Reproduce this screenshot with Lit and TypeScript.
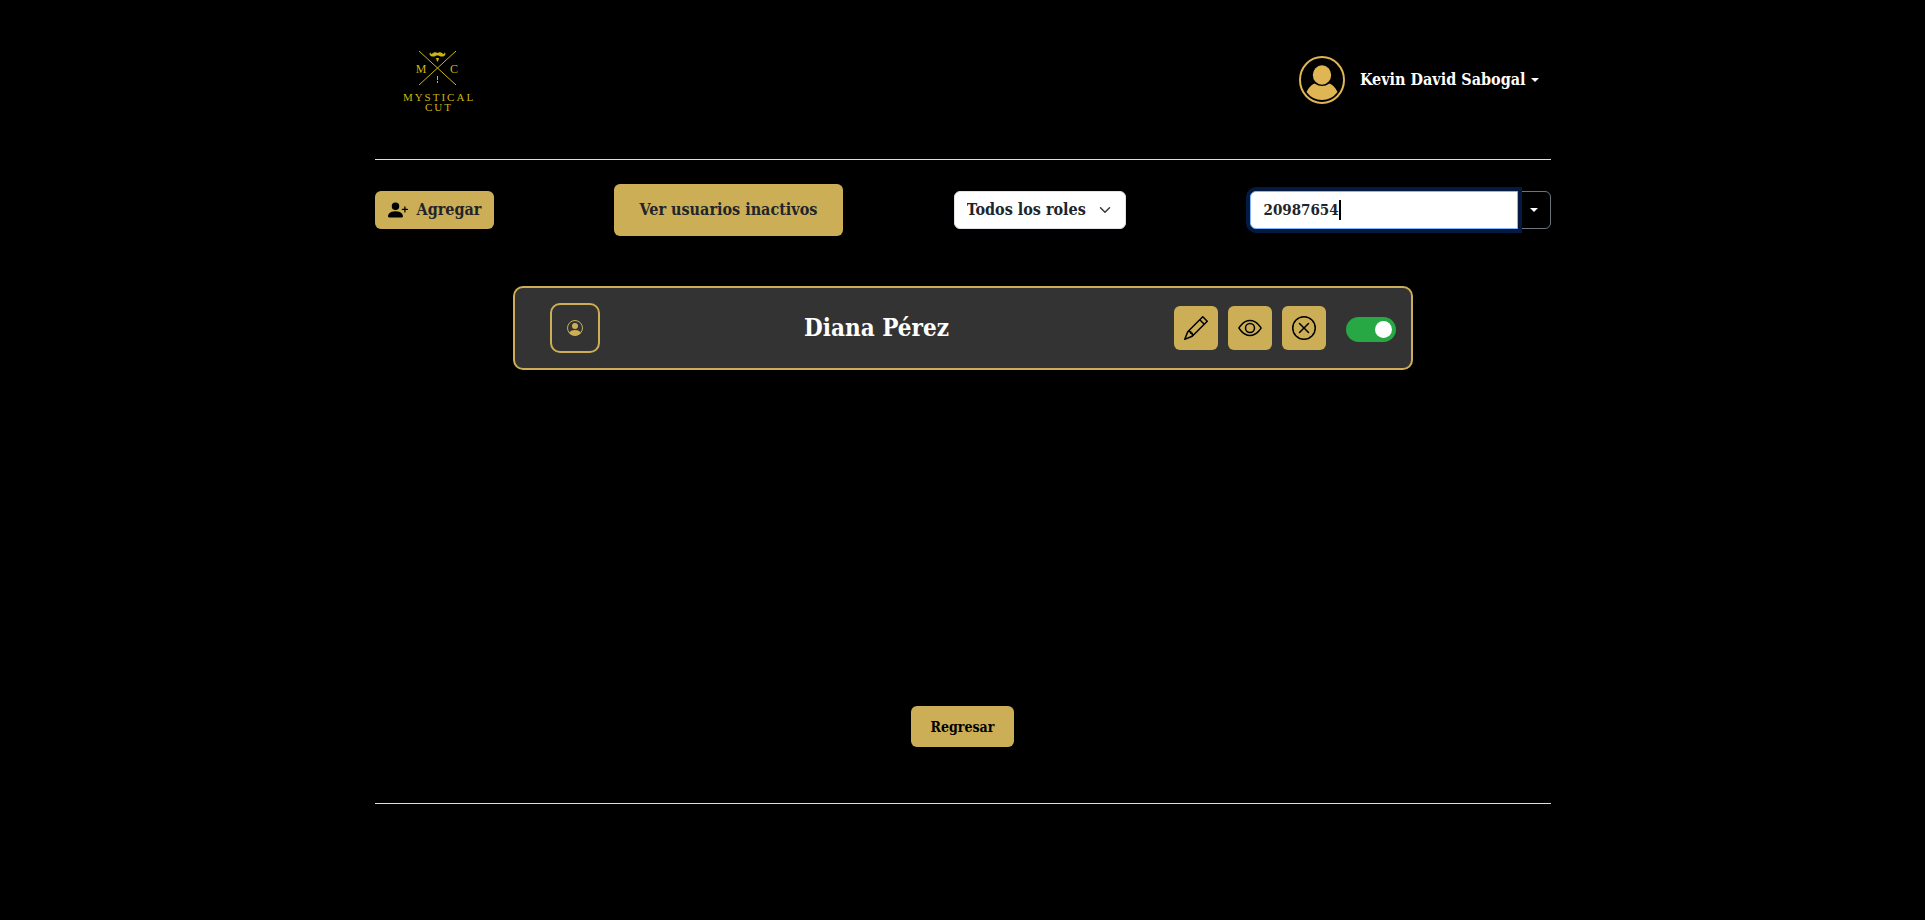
import { LitElement, html, css, svg } from "lit";
import { customElement, query, state } from "lit/decorators.js";

const personPlus = svg`<path d="M1 14s-1 0-1-1 1-4 6-4 6 3 6 4-1 1-1 1zm5-6a3 3 0 1 0 0-6 3 3 0 0 0 0 6"/><path fill-rule="evenodd" d="M13.5 5a.5.5 0 0 1 .5.5V7h1.5a.5.5 0 0 1 0 1H14v1.5a.5.5 0 0 1-1 0V8h-1.5a.5.5 0 0 1 0-1H13V5.500a.5.5 0 0 1 .5-.5"/>`;
const pencil = svg`<path d="M12.146.146a.5.5 0 0 1 .708 0l3 3a.5.5 0 0 1 0 .708l-10 10a.5.5 0 0 1-.168.11l-5 2a.5.5 0 0 1-.65-.65l2-5a.5.5 0 0 1 .11-.168zM11.207 2.500 13.500 4.793 14.793 3.500 12.500 1.207zm1.586 3L10.500 3.207 4 9.707V10h.5a.5.5 0 0 1 .5.5v.5h.5a.5.5 0 0 1 .5.5v.5h.293zm-9.761 5.175-.106.106-1.528 3.821 3.821-1.528.106-.106A.5.5 0 0 1 5 12.500V12h-.5a.5.5 0 0 1-.5-.5V11h-.5a.5.5 0 0 1-.468-.325"/>`;
const eye = svg`<path d="M16 8s-3-5.500-8-5.500S0 8 0 8s3 5.500 8 5.500S16 8 16 8M1.173 8a13 13 0 0 1 1.660-2.043C4.120 4.668 5.880 3.500 8 3.500s3.879 1.168 5.168 2.457A13 13 0 0 1 14.828 8q-.086.130-.195.288c-.335.480-.830 1.120-1.465 1.755C11.879 11.332 10.119 12.500 8 12.500s-3.879-1.168-5.168-2.457A13 13 0 0 1 1.172 8z"/><path d="M8 5.500a2.500 2.500 0 1 0 0 5 2.500 2.500 0 0 0 0-5M4.500 8a3.500 3.500 0 1 1 7 0 3.500 3.500 0 0 1-7 0"/>`;
const xCircle = svg`<path d="M8 15A7 7 0 1 1 8 1a7 7 0 0 1 0 14m0 1A8 8 0 1 0 8 0a8 8 0 0 0 0 16"/><path d="M4.646 4.646a.5.5 0 0 1 .708 0L8 7.293l2.646-2.647a.5.5 0 0 1 .708.708L8.707 8l2.647 2.646a.5.5 0 0 1-.708.708L8 8.707l-2.646 2.647a.5.5 0 0 1-.708-.708L7.293 8 4.646 5.354a.5.5 0 0 1 0-.708"/>`;

@customElement("app-root")
export class AppRoot extends LitElement {
  @state() private search = "20987654";
  @state() private caretAt = 8;
  @query(".search") private searchBox!: HTMLInputElement;

  static styles = css`
    :host {
      --gold: #cbae55;
      display: block;
      box-sizing: border-box;
      min-height: 100vh;
      padding: 0 24px;
      background: #000;
      color: #fff;
      font: bold 16px/24px "DejaVu Serif Condensed", "DejaVu Serif", serif;
      font-stretch: condensed;
    }
    * { box-sizing: border-box; }
    button, input, select { font: inherit; margin: 0; }
    button { cursor: pointer; }
    svg { display: block; fill: currentColor; }
    .page { max-width: 1176px; margin: 0 auto; }
    .header {
      display: flex;
      align-items: center;
      justify-content: space-between;
      height: 159px;
      padding: 0 12px;
    }
    .brand { margin-left: 12px; color: #cdb50f; }
    .brand text { font: 12px "Liberation Serif", serif; text-anchor: middle; }
    .brand .wordmark { font-size: 11px; letter-spacing: 2px; }
    .account {
      display: flex;
      align-items: center;
      gap: 15px;
      padding: 0;
      border: 0;
      background: none;
      color: #fff;
    }
    .avatar { color: #e0b554; }
    .label { display: flex; align-items: center; gap: 5px; }
    .rule { height: 1px; margin: 0; border: 0; background: #dedede; }
    .toolbar {
      display: grid;
      grid-template-columns: 216fr 276fr 346fr 338fr;
      align-items: center;
      padding: 24px 0 50px;
    }
    .gold { border: 0; border-radius: 6px; background: var(--gold); color: #212529; }
    .add { display: flex; align-items: center; justify-self: start; gap: 9px; height: 38px; padding: 0 13px; }
    .add svg { color: #000; }
    .inactive { justify-self: center; height: 52px; padding: 0 26px; }
    .roles { display: grid; justify-self: center; align-items: center; width: 172px; }
    .roles > * { grid-area: 1 / 1; }
    .roles select {
      width: 100%;
      height: 38px;
      padding: 0 36px 0 12px;
      border: 1px solid #dee2e6;
      border-radius: 6px;
      appearance: none;
      background: #fff;
      color: #212529;
    }
    .roles svg { justify-self: end; margin-right: 15px; pointer-events: none; color: #343a40; }
    .find { display: flex; justify-self: end; width: 301px; font-size: 15px; position: relative; }
    .search {
      flex: 1;
      min-width: 0;
      height: 38px;
      padding: 0 13px;
      border: 1px solid #86b7fe;
      border-radius: 6px 0 0 6px;
      outline: 0;
      background: #fff;
      color: #212529;
      caret-color: transparent;
      box-shadow: 0 0 0 4px #031b40;
      z-index: 1;
    }
    .cursor {
      position: absolute;
      top: 9px;
      width: 2px;
      height: 20px;
      background: #000;
      z-index: 2;
      pointer-events: none;
    }
    .more {
      display: grid;
      place-items: center;
      width: 34px;
      height: 38px;
      margin-left: -1px;
      padding: 0;
      border: 1px solid #6c757d;
      border-radius: 0 6px 6px 0;
      background: #000;
      color: #fff;
    }
    .results { min-height: 420px; }
    .card {
      display: flex;
      align-items: center;
      max-width: 900px;
      margin: 0 auto;
      padding: 15px 15px 15px 35px;
      border: 2px solid var(--gold);
      border-radius: 10px;
      background: #333;
    }
    .photo {
      display: grid;
      place-items: center;
      width: 50px;
      height: 50px;
      border: 2px solid var(--gold);
      border-radius: 10px;
      color: var(--gold);
    }
    .name { flex: 1; margin: 0 20px 0 0; text-align: center; font-size: 24px; line-height: 30px; }
    .actions { display: flex; gap: 10px; }
    .action { display: grid; place-items: center; width: 44px; height: 44px; padding: 0; color: #000; }
    .switch {
      width: 50px;
      height: 25px;
      margin: 3px 0 0 20px;
      padding: 4px;
      border-radius: 13px;
      appearance: none;
      background: #dc3545;
      cursor: pointer;
    }
    .switch::before {
      content: "";
      display: block;
      width: 17px;
      height: 17px;
      border-radius: 50%;
      background: #fff;
    }
    .switch:checked { background: #28a745; }
    .switch:checked::before { margin-left: 25px; }
    .footer { display: flex; justify-content: center; padding-bottom: 56px; }
    .back { height: 41px; padding: 0 20px; font-size: 14px; color: #000; }
  `;

  firstUpdated() {
    this.searchBox.focus();
    this.searchBox.setSelectionRange(this.search.length, this.search.length);
  }

  private track() {
    this.search = this.searchBox.value;
    this.caretAt = this.searchBox.selectionEnd ?? this.search.length;
  }

  private icon(shape: unknown, size: number) {
    return html`<svg width=${size} height=${size} viewBox="0 0 16 16" aria-hidden="true">${shape}</svg>`;
  }

  private caret() {
    return html`<svg width="8" height="4" viewBox="0 0 8 4" aria-hidden="true"><path d="M0 0h8L4 4z"/></svg>`;
  }

  render() {
    return html`
      <div class="page">
        <header class="header">
          <svg class="brand" width="76" height="64" viewBox="0 0 76 64" role="img" aria-label="Mystical Cut">
            <path d="M20 3 57 37M57 3 20 37" fill="none" stroke="currentColor" stroke-width="1"/>
            <path d="M32 4.500c-.8.300-.5 1.400.5 1.400 1.300 0 1.800-1.600 3.300-1.600 1.200 0 2 .7 2.700.7s1.500-.7 2.700-.7c1.500 0 2 1.600 3.300 1.600 1 0 1.300-1.100.5-1.400 1.200-.3 1.800 1 1.300 2.200-.8 2-4.300 2.300-5.800 1.300-.8-.5-1.300-.6-2-.6s-1.200.1-2 .6c-1.500 1-5 .7-5.800-1.300-.5-1.200.1-2.500 1.300-2.200"/>
            <path d="M37 10h3l-.5 2-1 2-1-2zM38 28h1v4h-1zM38 33h1v2h-1z"/>
            <text x="22" y="25">M</text>
            <text x="55" y="25">C</text>
            <text class="wordmark" x="40" y="53">MYSTICAL</text>
            <text class="wordmark" x="40" y="63">CUT</text>
          </svg>
          <button class="account" type="button" aria-haspopup="menu">
            <svg class="avatar" width="46" height="48" viewBox="0 0 46 48" aria-hidden="true">
              <ellipse cx="23" cy="24" rx="22" ry="23" fill="none" stroke="currentColor" stroke-width="2"/>
              <ellipse cx="23" cy="19" rx="9.200" ry="9.700"/>
              <path d="M15.500 27.500q7.500 5 15 0 5 2 8 8.500-6 8-15.500 8T7.500 36q3-6.500 8-8.500"/>
            </svg>
            <span class="label">Kevin David Sabogal ${this.caret()}</span>
          </button>
        </header>
        <hr class="rule" />
        <section class="toolbar">
          <button class="gold add" type="button">${this.icon(personPlus, 20)}Agregar</button>
          <button class="gold inactive" type="button">Ver usuarios inactivos</button>
          <div class="roles">
            <select aria-label="Rol"><option>Todos los roles</option></select>
            <svg width="12" height="12" viewBox="0 0 16 16" aria-hidden="true">
              <path fill="none" stroke="currentColor" stroke-width="2" stroke-linecap="round" stroke-linejoin="round" d="m2 5 6 6 6-6"/>
            </svg>
          </div>
          <div class="find">
            <input class="search" type="text" aria-label="Buscar" .value=${this.search}
              @input=${this.track} @keyup=${this.track} @click=${this.track} />
            <span class="cursor" style="left: calc(14px + ${this.caretAt}ch)"></span>
            <button class="more" type="button" aria-label="Opciones">${this.caret()}</button>
          </div>
        </section>
        <main class="results">
          <article class="card">
            <div class="photo">
              <svg width="16" height="16" viewBox="0 0 16 16" aria-hidden="true">
                <circle cx="8" cy="8" r="7.500" fill="none" stroke="currentColor"/>
                <circle cx="8" cy="6" r="3"/>
                <path d="M2 13q1.500-3 6-3t6 3q-2 2.500-6 2.500T2 13"/>
              </svg>
            </div>
            <h2 class="name">Diana Pérez</h2>
            <div class="actions">
              <button class="gold action" type="button" aria-label="Editar">${this.icon(pencil, 24)}</button>
              <button class="gold action" type="button" aria-label="Ver">${this.icon(eye, 24)}</button>
              <button class="gold action" type="button" aria-label="Eliminar">${this.icon(xCircle, 24)}</button>
            </div>
            <input class="switch" type="checkbox" role="switch" aria-label="Activo" checked />
          </article>
        </main>
        <div class="footer"><button class="gold back" type="button">Regresar</button></div>
        <hr class="rule" />
      </div>
    `;
  }
}
